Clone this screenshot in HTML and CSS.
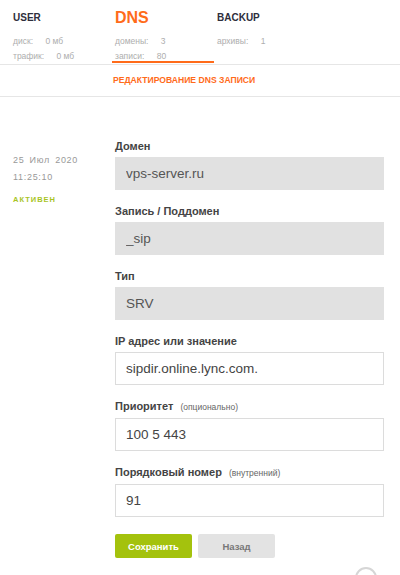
FILE: index.html
```html
<!DOCTYPE html>
<html lang="ru">
<head>
    <meta charset="UTF-8">
    <meta name="viewport" content="width=device-width, initial-scale=1.0">
    <title>Редактирование DNS записи</title>
    <link rel="stylesheet" href="styles.css">
</head>
<body>
    <div class="top-nav">
        <div class="nav-col">
            <div class="nav-title">USER</div>
            <div class="nav-stats">
                <div class="stat"><span class="stat-label">диск:</span> 0 мб</div>
                <div class="stat"><span class="stat-label">трафик:</span> 0 мб</div>
            </div>
        </div>
        <div class="nav-col active">
            <div class="nav-title">DNS</div>
            <div class="nav-stats">
                <div class="stat"><span class="stat-label">домены:</span> 3</div>
                <div class="stat"><span class="stat-label">записи:</span> 80</div>
            </div>
        </div>
        <div class="nav-col">
            <div class="nav-title">BACKUP</div>
            <div class="nav-stats">
                <div class="stat"><span class="stat-label">архивы:</span> 1</div>
            </div>
        </div>
    </div>

    <div class="sub-nav">Редактирование DNS записи</div>

    <div class="main">
        <div class="record-info">
            <div class="record-date">25 Июл 2020<br>11:25:10</div>
            <div class="record-status">Активен</div>
        </div>

        <form class="record-form">
            <div class="field">
                <label for="domain">Домен</label>
                <input type="text" id="domain" class="readonly" value="vps-server.ru" readonly>
            </div>
            <div class="field">
                <label for="sub">Запись / Поддомен</label>
                <input type="text" id="sub" class="readonly" value="_sip" readonly>
            </div>
            <div class="field">
                <label for="type">Тип</label>
                <input type="text" id="type" class="readonly" value="SRV" readonly>
            </div>
            <div class="field">
                <label for="value">IP адрес или значение</label>
                <input type="text" id="value" value="sipdir.online.lync.com.">
            </div>
            <div class="field">
                <label for="prio">Приоритет <span class="hint">(опционально)</span></label>
                <input type="text" id="prio" value="100 5 443">
            </div>
            <div class="field">
                <label for="order">Порядковый номер <span class="hint">(внутренний)</span></label>
                <input type="text" id="order" value="91">
            </div>
            <div class="actions">
                <button type="button" class="btn btn-save">Сохранить</button>
                <button type="button" class="btn btn-back">Назад</button>
            </div>
        </form>
    </div>

    <div class="to-top"></div>
</body>
</html>
```

FILE: styles.css
```css
body {
    font-family: 'Liberation Sans', Arial, sans-serif;
    background-color: #ffffff;
    margin: 0;
    padding: 0;
    color: #444;
}

.top-nav {
    display: grid;
    grid-template-columns: 102px 102px auto;
    padding: 0 0 1px 10px;
    border-bottom: 1px solid #e6e6e6;
}

.nav-col {
    padding: 10px 0 0 3px;
    border-bottom: 2px solid transparent;
}

.nav-col.active {
    border-bottom-color: #ff6b1a;
}

.nav-title {
    height: 16px;
    line-height: 16px;
    font-size: 10px;
    font-weight: bold;
    color: #2e2e3c;
}

.nav-col.active .nav-title {
    font-size: 16px;
    color: #ff6b1a;
}

.nav-stats {
    margin-top: 8px;
    margin-bottom: -3px;
    height: 30px;
}

.stat {
    font-size: 8.5px;
    line-height: 15px;
    color: #aeaeae;
}

.stat-label {
    margin-right: 10px;
}

.sub-nav {
    height: 31px;
    line-height: 31px;
    padding-left: 113px;
    font-size: 8.6px;
    font-weight: bold;
    text-transform: uppercase;
    color: #ff6b1a;
    border-bottom: 1px solid #e6e6e6;
}

.main {
    display: flex;
    padding: 43px 16px 0 13px;
}

.record-info {
    width: 102px;
    padding-top: 12px;
}

.record-date {
    font-size: 9px;
    line-height: 17px;
    letter-spacing: 0.7px;
    word-spacing: 2px;
    color: #999;
}

.record-status {
    margin-top: 8px;
    font-size: 7.5px;
    line-height: 12px;
    font-weight: bold;
    letter-spacing: 1px;
    text-transform: uppercase;
    color: #a8c41f;
}

.record-form {
    flex: 1;
}

.field {
    margin-bottom: 15px;
}

.field label {
    display: block;
    font-size: 11px;
    line-height: 13px;
    font-weight: bold;
    color: #444;
    margin-bottom: 4px;
}

.field .hint {
    font-size: 8.5px;
    font-weight: normal;
    color: #666;
    margin-left: 4px;
}

.field input {
    display: block;
    width: 100%;
    height: 33px;
    padding: 0 10px;
    border: 1px solid #dcdcdc;
    border-radius: 0;
    background-color: #fff;
    font-family: 'Liberation Sans', Arial, sans-serif;
    font-size: 13.5px;
    color: #444;
    box-sizing: border-box;
    outline: none;
}

.field input.readonly {
    background-color: #e1e1e1;
    border-color: #e1e1e1;
    color: #555;
}

.actions {
    display: flex;
    gap: 6px;
    margin-top: 17px;
}

.btn {
    width: 77px;
    height: 24px;
    border: none;
    border-radius: 2px;
    font-family: 'Liberation Sans', Arial, sans-serif;
    font-size: 9.5px;
    font-weight: bold;
    cursor: pointer;
}

.btn-save {
    background-color: #a4c20d;
    color: #fff;
}

.btn-back {
    background-color: #e3e3e3;
    color: #777;
}

.to-top {
    position: fixed;
    left: 355px;
    bottom: -14px;
    width: 18px;
    height: 18px;
    border: 2px solid #d6d6d6;
    border-radius: 50%;
    background-color: #fff;
}
```
